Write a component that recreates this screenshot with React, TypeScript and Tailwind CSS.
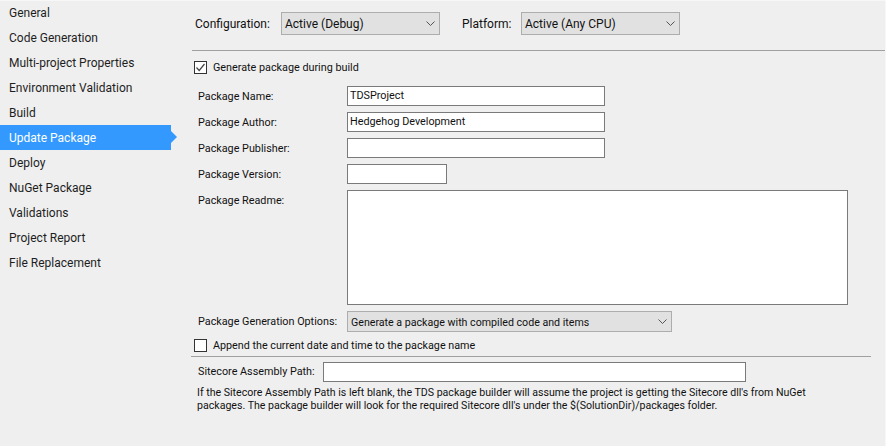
const F = "font-['Roboto','Noto_Sans',sans-serif]";

const nav = [
  "General",
  "Code Generation",
  "Multi-project Properties",
  "Environment Validation",
  "Build",
  "Update Package",
  "Deploy",
  "NuGet Package",
  "Validations",
  "Project Report",
  "File Replacement",
];

function Chevron() {
  return (
    <svg width="9" height="5" viewBox="0 0 9 5" className="shrink-0">
      <path d="M0.5 0.5 L4.5 4.5 L8.5 0.5" fill="none" stroke="#555" strokeWidth="1" />
    </svg>
  );
}

function Select({ value, className, textClass }: { value: string; className: string; textClass: string }) {
  return (
    <div className={`flex items-center justify-between bg-[#e1e1e1] border border-[#adadad] pl-[3px] pr-[4px] text-[#111] ${className}`}>
      <span className={`whitespace-nowrap ${textClass}`}>{value}</span>
      <Chevron />
    </div>
  );
}

function Field({ value = "", className }: { value?: string; className: string }) {
  return (
    <div className={`flex items-center bg-white border border-[#7a7a7a] pl-[2px] text-[10.8px] text-[#111] ${className}`}>
      <span className="whitespace-nowrap pt-px">{value}</span>
    </div>
  );
}

function Row({ label, value, width }: { label: string; value?: string; width: string }) {
  return (
    <div className="flex items-center h-[20px]">
      <span className="w-[155px] shrink-0 pl-[6px] pt-[2px] text-[10.8px] text-[#111] whitespace-nowrap">{label}</span>
      <Field value={value} className={`h-[20px] ${width}`} />
    </div>
  );
}

function Check({ checked }: { checked?: boolean }) {
  return (
    <div className="w-[13px] h-[13px] bg-white border border-[#333] flex items-center justify-center shrink-0">
      {checked && (
        <svg width="11" height="11" viewBox="0 0 11 11">
          <path d="M1.5 5.5 L4.2 8.5 L9.5 2" fill="none" stroke="#444" strokeWidth="1.2" />
        </svg>
      )}
    </div>
  );
}

export default function App() {
  return (
    <div className={`${F} w-[886px] h-[446px] bg-[#efefef] flex overflow-hidden border-t border-r border-[#f7f7f7] text-[#111]`}>
      <div className="w-[192px] shrink-0 -mt-px">
        {nav.map((n) => {
          const active = n === "Update Package";
          return (
            <div key={n} className={`relative h-[25px] w-[171px] pl-[9px] flex items-center text-[12px] whitespace-nowrap ${active ? "bg-[#3399ff] text-white" : "text-[#1e1e1e]"}`}>
              {n}
              {active && (
                <div className="absolute left-[171px] top-[6px] w-0 h-0 border-y-[6px] border-y-transparent border-l-[6px] border-l-[#3399ff]" />
              )}
            </div>
          );
        })}
      </div>
      <div className="flex-1 flex flex-col">
        <div className="flex items-center h-[23px] mt-[11px] pl-[3px] text-[12px]">
          <span className="w-[86px] pt-px whitespace-nowrap">Configuration:</span>
          <Select value="Active (Debug)" textClass="text-[12px] pt-px" className="w-[159px] h-[23px]" />
          <span className="ml-[22px] w-[59px] pt-px whitespace-nowrap">Platform:</span>
          <Select value="Active (Any CPU)" textClass="text-[12px] pt-px" className="w-[159px] h-[23px]" />
        </div>
        <div className="h-px bg-[#a0a0a0] mt-[15px]" />
        <div className="flex items-center gap-[6px] mt-[10px] h-[13px] pl-[2px] text-[10.8px]">
          <Check checked />
          <span className="whitespace-nowrap pt-[2px]">Generate package during build</span>
        </div>
        <div className="flex flex-col gap-[6px] mt-[12px]">
          <Row label="Package Name:" value="TDSProject" width="w-[258px]" />
          <Row label="Package Author:" value="Hedgehog Development" width="w-[258px]" />
          <Row label="Package Publisher:" width="w-[258px]" />
          <Row label="Package Version:" width="w-[100px]" />
          <div className="flex">
            <span className="w-[155px] shrink-0 pl-[6px] pt-[3px] text-[10.8px] whitespace-nowrap">Package Readme:</span>
            <Field className="w-[501px] h-[115px]" />
          </div>
          <div className="flex items-center h-[21px]">
            <span className="w-[155px] shrink-0 pl-[6px] pt-[2px] text-[10.8px] whitespace-nowrap">Package Generation Options:</span>
            <Select value="Generate a package with compiled code and items" textClass="text-[10.65px] pt-[2px]" className="w-[325px] h-[21px]" />
          </div>
        </div>
        <div className="flex items-center gap-[6px] mt-[7px] h-[13px] pl-[2px] text-[10.75px]">
          <Check />
          <span className="whitespace-nowrap pt-[2px]">Append the current date and time to the package name</span>
        </div>
        <div className="h-px bg-[#a0a0a0] mt-[4px] -ml-px w-[680px]" />
        <div className="flex items-center h-[20px] mt-[5px]">
          <span className="w-[131px] shrink-0 pl-[6px] pt-px text-[10.8px] whitespace-nowrap">Sitecore Assembly Path:</span>
          <Field className="w-[423px] h-[20px]" />
        </div>
        <p className="mt-[4px] pl-[5px] w-[650px] text-[10.6px] leading-[13px]">
          If the Sitecore Assembly Path is left blank, the TDS package builder will assume the project is getting the Sitecore dll's from NuGet packages. The package builder will look for the required Sitecore dll's under the $(SolutionDir)/packages folder.
        </p>
      </div>
    </div>
  );
}
